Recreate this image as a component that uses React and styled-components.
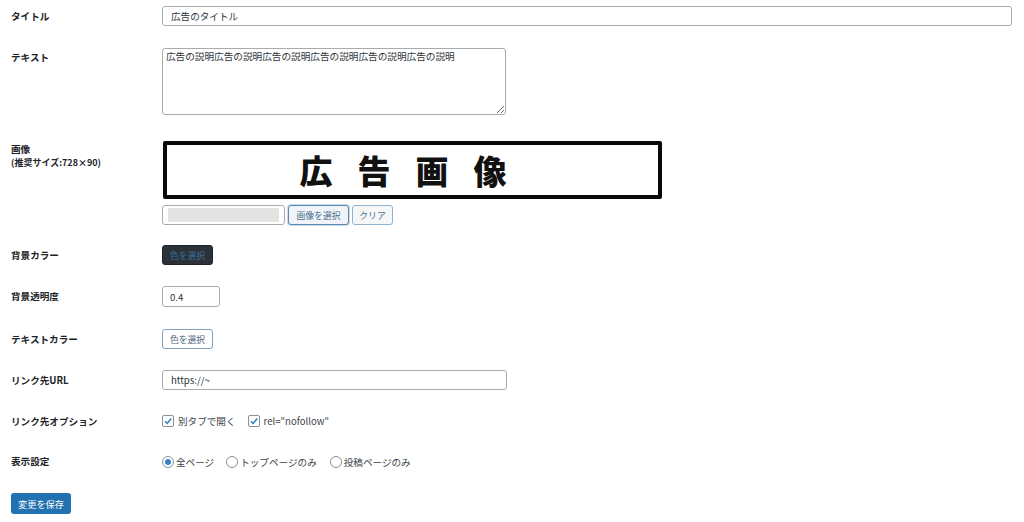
import React from 'react';
import styled, { createGlobalStyle } from 'styled-components';

const GlobalStyle = createGlobalStyle`
    body {
        margin: 0;
        background: #ffffff;
        font-family: "Noto Sans CJK JP", "Noto Sans", sans-serif;
        color: #1d2327;
    }
`;

const Page = styled.div`
    display: flex;
    flex-direction: column;
    gap: 21px;
    padding: 6px 12px 0 11px;
`;

const Row = styled.div`
    display: flex;
    align-items: flex-start;
    height: ${({ $h }) => $h}px;
`;

const Label = styled.div`
    width: 151px;
    flex-shrink: 0;
    font-size: 9.6px;
    font-weight: 700;
    line-height: 14px;
    padding-top: ${({ $top }) => ($top !== undefined ? $top : 3)}px;
    color: #1d2327;
`;

const SubLabel = styled.div`
    font-weight: 700;
    font-size: 9px;
`;

const Field = styled.div`
    display: flex;
    flex-direction: column;
    gap: 6px;
`;

const TextInput = styled.div`
    box-sizing: border-box;
    width: ${({ $w }) => $w}px;
    height: ${({ $hh }) => $hh || 20}px;
    border: 1px solid #a9acaf;
    border-radius: 3px;
    padding-left: ${({ $pad }) => $pad || 8}px;
    font-size: 9.6px;
    line-height: 18px;
    color: #2c3338;
    display: flex;
    align-items: center;
`;

const Censor = styled.span`
    display: block;
    width: 111px;
    height: 14px;
    background: #e3e3e3;
`;

const TextArea = styled.textarea`
    box-sizing: border-box;
    width: 344px;
    height: 67px;
    border: 1px solid #a9acaf;
    border-radius: 3px;
    padding: 0 3px;
    margin: 0;
    font-family: "Noto Sans CJK JP", sans-serif;
    font-size: 9.65px;
    line-height: 14px;
    color: #2c3338;
    resize: both;
`;

const AdImage = styled.div`
    box-sizing: border-box;
    width: 499px;
    height: 58px;
    margin-left: 1px;
    border: 4px solid #0a0a0a;
    border-radius: 2px;
    display: flex;
    align-items: center;
    justify-content: center;
    font-size: 33px;
    font-weight: 900;
    letter-spacing: 25px;
    padding-left: 6px;
    color: #111;
`;

const Inline = styled.div`
    display: flex;
    align-items: center;
    height: ${({ $h }) => ($h ? `${$h}px` : 'auto')};
    gap: ${({ $gap }) => ($gap !== undefined ? $gap : 4)}px;
`;

const Button = styled.div`
    box-sizing: border-box;
    width: ${({ $w }) => $w}px;
    height: 20px;
    border-radius: 3px;
    font-size: 8.8px;
    display: flex;
    align-items: center;
    justify-content: center;
    background: ${({ $variant }) =>
        $variant === 'dark' ? '#2b3136' : $variant === 'focus' ? '#f0f4f8' : '#f6f7f7'};
    border: 1px solid ${({ $variant }) =>
        $variant === 'dark' ? '#1d2327' : $variant === 'focus' ? '#5b86ad' : '#90b3d0'};
    color: ${({ $variant }) => ($variant === 'dark' ? '#3d6e9c' : '#4b6f8f')};
    box-shadow: ${({ $variant }) => ($variant === 'focus' ? '0 0 0 1px #c9dcec' : 'none')};
`;

const WhiteButton = styled(Button)`
    background: #ffffff;
    border-color: #7f9fbb;
    color: #50677c;
`;

const Choice = styled.label`
    display: flex;
    align-items: center;
    gap: ${({ $gap }) => $gap || 4}px;
    font-size: 9.6px;
    color: #3c434a;
    margin-right: ${({ $mr }) => $mr || 10}px;
`;

const Box = styled.span`
    box-sizing: border-box;
    width: 12px;
    height: 12px;
    border: 1px solid #8c8f94;
    border-radius: 2px;
    display: flex;
    align-items: center;
    justify-content: center;
`;

const Radio = styled.span`
    box-sizing: border-box;
    width: 12px;
    height: 12px;
    border: 1px solid #8c8f94;
    border-radius: 50%;
    display: flex;
    align-items: center;
    justify-content: center;
    &::after {
        content: '';
        width: 6px;
        height: 6px;
        border-radius: 50%;
        background: ${({ $on }) => ($on ? '#3582c4' : 'transparent')};
    }
`;

const SaveButton = styled.div`
    width: 60px;
    height: 21px;
    border-radius: 3px;
    background: #2271b1;
    color: #ffffff;
    font-size: 9.2px;
    display: flex;
    align-items: center;
    justify-content: center;
`;

const Check = () => (
    <Box>
        <svg width="10" height="10" viewBox="0 0 10 10">
            <path d="M2 5.2 L4.2 7.4 L8.2 2.6" fill="none" stroke="#3582c4" strokeWidth="1.6" />
        </svg>
    </Box>
);

export default function App() {
    return (
        <>
            <GlobalStyle />
            <Page>
                <Row $h={21}>
                    <Label>タイトル</Label>
                    <TextInput $w={851}>広告のタイトル</TextInput>
                </Row>
                <Row $h={72}>
                    <Label $top={2}>テキスト</Label>
                    <TextArea defaultValue="広告の説明広告の説明広告の説明広告の説明広告の説明広告の説明" />
                </Row>
                <Row $h={83}>
                    <Label $top={1}>
                        画像
                        <SubLabel>(推奨サイズ:728×90)</SubLabel>
                    </Label>
                    <Field>
                        <AdImage>広告画像</AdImage>
                        <Inline $gap={3}>
                            <TextInput $w={123} $pad={5}><Censor /></TextInput>
                            <Button $w={61} $variant="focus">画像を選択</Button>
                            <Button $w={41}>クリア</Button>
                        </Inline>
                    </Field>
                </Row>
                <Row $h={20}>
                    <Label>背景カラー</Label>
                    <Button $w={51} $variant="dark">色を選択</Button>
                </Row>
                <Row $h={22}>
                    <Label>背景透明度</Label>
                    <TextInput $w={58} $hh={21} $pad={7}>0.4</TextInput>
                </Row>
                <Row $h={20}>
                    <Label>テキストカラー</Label>
                    <WhiteButton $w={51}>色を選択</WhiteButton>
                </Row>
                <Row $h={20}>
                    <Label>リンク先URL</Label>
                    <TextInput $w={345}>https://~</TextInput>
                </Row>
                <Row $h={19}>
                    <Label>リンク先オプション</Label>
                    <Inline $gap={0} $h={19}>
                        <Choice $mr={12}><Check />別タブで開く</Choice>
                        <Choice><Check />rel="nofollow"</Choice>
                    </Inline>
                </Row>
                <Row $h={21}>
                    <Label>表示設定</Label>
                    <Inline $gap={0} $h={21}>
                        <Choice $gap={2} $mr={12}><Radio $on />全ページ</Choice>
                        <Choice $gap={2} $mr={13}><Radio />トップページのみ</Choice>
                        <Choice $gap={2}><Radio />投稿ページのみ</Choice>
                    </Inline>
                </Row>
                <SaveButton>変更を保存</SaveButton>
            </Page>
        </>
    );
}
